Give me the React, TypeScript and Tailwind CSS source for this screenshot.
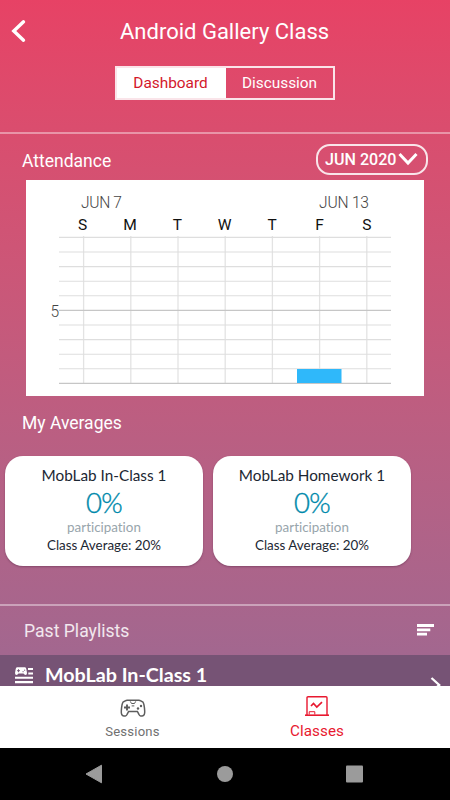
const days = ["S", "M", "T", "W", "T", "F", "S"];
const averages = ["MobLab In-Class 1", "MobLab Homework 1"];

function AttendanceChart() {
  return (
    <svg
      width="398"
      height="216"
      viewBox="26 180 398 216"
      className="ml-[26px] block bg-white font-['Roboto',sans-serif]"
    >
      <g fill="#444" fontSize="15.6" fontWeight="300">
        <text x="81" y="208" textLength="41">JUN 7</text>
        <text x="319" y="208" textLength="50">JUN 13</text>
        <text x="50.5" y="317">5</text>
      </g>
      {days.map((day, i) => (
        <g key={i}>
          <text x={82.5 + i * 47.4} y="230" fontSize="15.5" textAnchor="middle" fill="#111">
            {day}
          </text>
          <path d={`M${83.6 + i * 47.2} 236V383`} stroke="#e3e3e3" strokeWidth="1.3" />
        </g>
      ))}
      {Array.from({ length: 11 }, (_, i) => (
        <path
          key={i}
          d={`M59 ${237.4 + i * 14.6}H391`}
          stroke={i === 5 || i === 10 ? "#c6c6c6" : "#dedede"}
          strokeWidth="1.1"
        />
      ))}
      <rect x="297" y="369" width="44.5" height="14" fill="#2fb8fa" />
    </svg>
  );
}

function AverageCard({ title }: { title: string }) {
  return (
    <div className="flex h-[110px] w-[198px] flex-col items-center rounded-[18px] bg-white font-['Lato',sans-serif] text-[#1c2733] shadow-[0_1px_2px_rgba(60,20,50,0.35)] [font-variant-ligatures:none]">
      <div className="mt-[9px] text-[15.3px] leading-5">{title}</div>
      <div className="mt-[3px] text-[27.5px] leading-[30px] font-light tracking-[-0.8px] text-[#0089ab] [-webkit-text-stroke:0.4px_#0089ab]">
        0%
      </div>
      <div className="mt-px text-[13.4px] leading-[17px] text-[#98a5ac]">participation</div>
      <div className="text-[13.4px] leading-[18px]">Class Average: 20%</div>
    </div>
  );
}

function GamepadIcon() {
  return (
    <svg width="26" height="20" viewBox="0 0 26 20" fill="none" stroke="#5d5d5d" strokeWidth="1.5">
      <path d="M5.2 2Q6 1.2 7.2 1.2H18.8Q20 1.2 20.8 2L23 3.2Q24.2 4.5 24.7 12Q25 16.9 22.2 16.9H20.6Q19.6 16.9 18.8 15.2L17.4 12.4H8.6L7.2 15.2Q6.4 16.9 5.4 16.9H3.8Q1 16.9 1.3 12Q1.8 4.5 3 3.2Z" />
      <path d="M4 8.5H10M7 5.5V11.5" strokeWidth="1.9" />
      <path d="M10.3 2.4L11.5 4.5H14.5L15.7 2.4M11.7 6.9H14.3" strokeWidth="1" />
      <g fill="#5d5d5d" stroke="none">
        <circle cx="18" cy="9.5" r="1.2" />
        <circle cx="21" cy="7" r="1.2" />
      </g>
    </svg>
  );
}

function BoardIcon() {
  return (
    <svg width="26" height="22" viewBox="0 0 26 22" fill="none" stroke="#e8182f" strokeWidth="1.4">
      <path d="M3 20V2.7Q3 1.7 4 1.7H22Q23 1.7 23 2.7V20" />
      <path d="M1 20.2H25" strokeWidth="1.6" />
      <path d="M7 11L9.5 8.5L12.8 12L18 7.2" strokeWidth="1.7" />
      <path d="M5.2 19.5V16.7H10.8V19.5" strokeWidth="1" />
    </svg>
  );
}

function PlaylistIcon() {
  return (
    <svg width="18" height="17" viewBox="0 0 18 17" fill="white">
      <path d="M2 .3H10Q11 .3 11.3 2L12 6Q12 8 10.5 8Q9.4 8 8.5 6.6H3.5Q2.6 8 1.5 8Q0 8 0 6L.7 2Q1 .3 2 .3Z" />
      <path d="M13 1H18V3H13ZM13.3 5.4H18V7.4H13.3ZM0 9.7H18V11.8H0ZM0 14H18V16.3H0Z" />
      <path d="M2 3.7H5M3.5 2.2V5.2M7.5 4.7H8.7M9 3.2H10.2" stroke="#735274" strokeWidth=".9" />
    </svg>
  );
}

export default function App() {
  return (
    <div className="flex h-[800px] w-[450px] flex-col overflow-hidden bg-black font-['Roboto',sans-serif]">
      <main className="h-[686px] shrink-0 overflow-hidden bg-linear-to-b from-[#e74265] to-[#9f6891] text-white">
        <header className="h-[134px] border-b-2 border-white/40">
          <div className="flex h-[66px] items-center">
            <svg width="16" height="24" viewBox="0 0 16 24" className="mb-[4px] ml-[11px]" fill="none" stroke="white" strokeWidth="3.4" strokeLinecap="round">
              <path d="M12.5 2.8L2.8 12L12.5 21.2" />
            </svg>
            <h1 className="mb-[3px] ml-[93px] text-[22px] leading-7">Android Gallery Class</h1>
          </div>
          <div className="ml-[115px] flex h-[34px] w-[220px] border-2 border-white/85 text-[15.4px]">
            <button className="w-[109px] bg-white pt-[2px] pr-[2px] text-[#d3182b]">Dashboard</button>
            <button className="flex-1 pt-[2px]">Discussion</button>
          </div>
        </header>
        <div className="flex h-[46px] items-start justify-between pt-[10px] pr-[22px] pl-[22px]">
          <h2 className="mt-[5px] text-[17.5px] leading-6">Attendance</h2>
          <button className="flex h-[31px] w-[112px] items-center rounded-[14px] border-2 border-white/85 pt-px pl-[7px] text-[16.1px] font-medium">
            JUN 2020
            <svg width="20" height="14" viewBox="0 0 20 14" className="mb-[2px] ml-[2px] shrink-0" fill="none" stroke="white" strokeWidth="3">
              <path d="M1.5 2L10 11L18.5 2" />
            </svg>
          </button>
        </div>
        <AttendanceChart />
        <h2 className="mt-[15px] ml-[22px] text-[17.5px] leading-6">My Averages</h2>
        <div className="mt-[21px] ml-[5px] flex gap-[10px]">
          {averages.map((title) => (
            <AverageCard key={title} title={title} />
          ))}
        </div>
        <div className="mt-[38px] flex h-[51px] items-center justify-between border-t-2 border-white/40 pr-[16px] pl-[24px]">
          <h2 className="pt-[2px] text-[17.6px] text-white/85">Past Playlists</h2>
          <svg width="17" height="12" viewBox="0 0 17 12" className="mb-px" stroke="white" strokeWidth="2.8">
            <path d="M0 1.5H17M0 5.9H13.3M0 10.2H10" />
          </svg>
        </div>
        <div className="flex h-[54px] bg-[#765375]">
          <div className="mt-[12px] ml-[15px]">
            <PlaylistIcon />
          </div>
          <h3 className="mt-[8px] ml-[12px] font-['Lato',sans-serif] text-[19.7px] leading-6 font-bold">
            MobLab In-Class 1
          </h3>
          <svg width="12" height="18" viewBox="0 0 12 18" className="mt-[21px] mr-[8px] ml-auto" fill="none" stroke="white" strokeWidth="2.3">
            <path d="M1.5 2L9.2 9L1.5 16" />
          </svg>
        </div>
      </main>
      <nav className="flex h-[62px] shrink-0 bg-white">
        <button className="ml-[92px] flex w-[81px] flex-col items-center text-[13.1px] text-[#707070]">
          <span className="mt-[13px] h-5">
            <GamepadIcon />
          </span>
          <span className="mt-[3px] leading-5 tracking-[0.2px]">Sessions</span>
        </button>
        <button className="ml-[103px] flex w-[82px] flex-col items-center text-[15.2px] text-[#e8182f]">
          <span className="mt-[9px] h-[22px]">
            <BoardIcon />
          </span>
          <span className="mt-[4px] leading-5 tracking-[0.1px]">Classes</span>
        </button>
      </nav>
      <footer className="flex h-[52px] items-center bg-black text-[#9b9b9b]">
        <svg width="450" height="52" viewBox="0 0 450 52" fill="currentColor">
          <path d="M86 26L101.5 17.2V34.8Z" stroke="currentColor" strokeLinejoin="round" />
          <circle cx="225" cy="26" r="8" />
          <rect x="346" y="17.5" width="17" height="17" rx="1" />
        </svg>
      </footer>
    </div>
  );
}
